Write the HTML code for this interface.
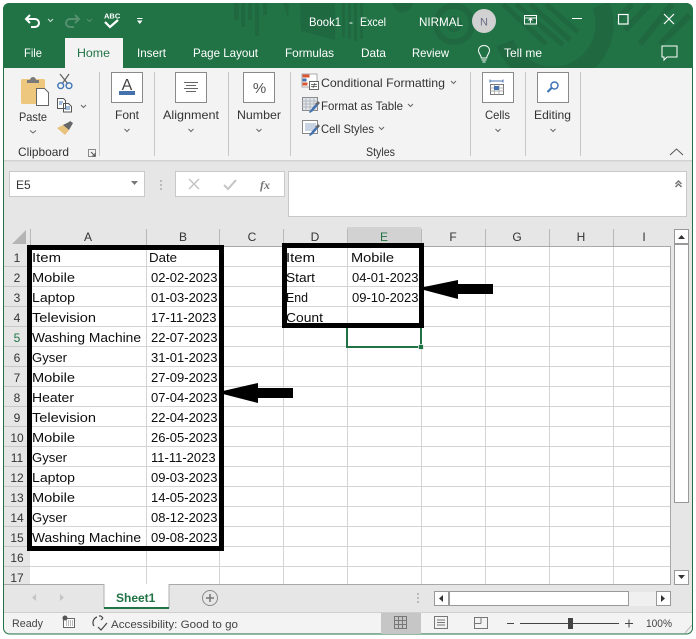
<!DOCTYPE html>
<html><head><meta charset="utf-8"><style>
html,body{margin:0;padding:0;background:#fff;width:696px;height:639px;overflow:hidden}
svg{display:block}
text{font-family:"Liberation Sans",sans-serif;white-space:pre}
.t{fill:#fff;font-size:12px}
.r{fill:#333;font-size:12px}
.c{fill:#0d0d0d;font-size:13px}
.h{fill:#333;font-size:12px;text-anchor:middle}
.car{fill:none;stroke:#666;stroke-width:1}
.g{stroke:#d4d4d4;stroke-width:1;fill:none}
</style></head><body>
<svg width="696" height="639" viewBox="0 0 696 639" xmlns="http://www.w3.org/2000/svg">
<defs><clipPath id="tb"><path d="M3 68V9a6 6 0 0 1 6-6H686a6 6 0 0 1 6 6V68Z"/></clipPath></defs>
<rect width="696" height="639" fill="#fff"/>
<!-- window -->
<rect x="3.500" y="3.500" width="689" height="630.500" rx="6" fill="#e6e6e6" stroke="#217346" stroke-width="1"/>
<path d="M3 68V9a6 6 0 0 1 6-6H686a6 6 0 0 1 6 6V68Z" fill="#217346"/>
<!-- title pattern -->
<g clip-path="url(#tb)">
<g fill="#1f6840">
<rect x="234" y="3" width="5" height="17"/><rect x="241" y="3" width="4" height="24"/><rect x="248" y="3" width="4" height="17"/><rect x="255" y="3" width="4" height="33"/><rect x="263" y="3" width="4" height="12"/>
<path d="M283 3h6l-1 14Z"/><path d="M300 3h35v37l-34-9Z" opacity=".9"/>
<rect x="342" y="3" width="3" height="34"/><rect x="348" y="3" width="3" height="36"/><rect x="354" y="3" width="3" height="38"/><rect x="360" y="3" width="3" height="36"/>
<path d="M392 3h21a11 13 0 0 1-21 0Z"/>
</g>
<g fill="none" stroke="#1f6840">
<circle cx="454" cy="24" r="18" stroke-width="6"/><circle cx="454" cy="24" r="6" stroke-width="4"/>
<path d="M505 43A51 51 0 0 0 601 5" stroke-width="18"/>
<path d="M503 4L546 44M516 4L563 45M530 4L570 40M546 4L578 32" stroke-width="5"/>
<path d="M632 4L617 20M650 4L625 30M672 4L640 44M690 15L660 44" stroke-width="6"/>
</g>
</g>
<!-- QAT -->
<g fill="none" stroke="#fff" stroke-width="2">
<path d="M30 15l-4 4 4 4M26 19h9a4 4 0 0 1 0 8h-4"/>
</g>
<path d="M48 19l2.500 2.500 2.500-2.500" fill="none" stroke="#cfe3d7"/>
<g fill="none" stroke="#55906f" stroke-width="2"><path d="M75 15l4 4-4 4M79 19h-9a4 4 0 0 0 0 8h4"/></g>
<path d="M87 19l2.500 2.500 2.500-2.500" fill="none" stroke="#55906f"/>
<text x="104" y="18.500" font-weight="bold" fill="#fff" style="font-size:7.500px">ABC</text>
<path d="M105 22l5 5 8-7" fill="none" stroke="#fff" stroke-width="2.200"/>
<path d="M137 18.500h5.500" stroke="#fff" fill="none"/><path d="M137 20.500h5.500l-2.750 3.500Z" fill="#fff"/>
<text class="t" x="309" y="26" textLength="32" lengthAdjust="spacingAndGlyphs">Book1</text>
<text class="t" x="349" y="26">-</text>
<text class="t" x="360" y="26" textLength="26" lengthAdjust="spacingAndGlyphs">Excel</text>
<text class="t" x="419" y="26" textLength="44" lengthAdjust="spacingAndGlyphs">NIRMAL</text>
<circle cx="484" cy="21" r="12" fill="#d1d1d1"/>
<text x="484" y="25.500" text-anchor="middle" style="font-size:11px" fill="#6b6b8a">N</text>
<g fill="none" stroke="#fff" stroke-width="1">
<rect x="524.500" y="15.500" width="12" height="8.500"/><path d="M524 18h13M530.500 23v-4M528.500 20.500l2-2 2 2"/>
<path d="M572 18.500h10"/><rect x="618.500" y="14.500" width="9.500" height="9.500" stroke-width="1.200"/>
<path d="M664 14l10 10M674 14l-10 10" stroke-width="1.200"/>
<path d="M661 46h15v11h-10l-3 3v-3h-2Z" transform="translate(1 0)"/>
<path d="M484.500 52c-3.500 0-5.500 2.500-5.500 5 0 3 2.500 4 2.800 7.500h5.400c.3-3.500 2.800-4.500 2.800-7.500 0-2.500-2-5-5.500-5ZM482 66.500h5M483 68.500h3" transform="translate(-.500 -6.500)"/>
</g>
<!-- tabs -->
<text class="t" x="24" y="57" textLength="18" lengthAdjust="spacingAndGlyphs">File</text>
<rect x="65" y="38" width="58" height="30" fill="#f3f3f3"/>
<text x="77" y="57" fill="#217346" style="font-size:12px" textLength="33" lengthAdjust="spacingAndGlyphs">Home</text>
<text class="t" x="137" y="57" textLength="29" lengthAdjust="spacingAndGlyphs">Insert</text>
<text class="t" x="193" y="57" textLength="65" lengthAdjust="spacingAndGlyphs">Page Layout</text>
<text class="t" x="285" y="57" textLength="49" lengthAdjust="spacingAndGlyphs">Formulas</text>
<text class="t" x="361" y="57" textLength="25" lengthAdjust="spacingAndGlyphs">Data</text>
<text class="t" x="412" y="57" textLength="37" lengthAdjust="spacingAndGlyphs">Review</text>
<text class="t" x="504" y="57" textLength="38" lengthAdjust="spacingAndGlyphs">Tell me</text>
<!-- ribbon -->
<rect x="4" y="68" width="688" height="92" fill="#f3f3f3"/>
<rect x="4" y="160" width="688" height="1.500" fill="#d2d2d2"/>
<g fill="#c6c6c6"><rect x="99" y="72" width="1" height="84"/><rect x="154" y="72" width="1" height="84"/><rect x="228" y="72" width="1" height="84"/><rect x="290" y="72" width="1" height="84"/><rect x="470" y="72" width="1" height="84"/><rect x="525" y="72" width="1" height="84"/><rect x="580" y="72" width="1" height="84"/></g>
<!-- paste -->
<rect x="21" y="79" width="24" height="25" rx="1.500" fill="#edc77d"/>
<path d="M27 82v-2h3a3 3 0 0 1 6 0h3v3H27Z" fill="#7a7a7a"/>
<path d="M36.500 88.500h8l4 4v13h-12Z" fill="#fff" stroke="#666"/>
<text class="r" x="19" y="121" textLength="28" lengthAdjust="spacingAndGlyphs">Paste</text>
<path class="car" d="M30 130.500l3 2.500 3-2.500"/>
<g fill="none" stroke="#666"><path d="M60 74l8 10M69 74l-7 10" stroke-width="1.300"/></g>
<g fill="none" stroke="#3f77b5" stroke-width="1.400"><circle cx="60.700" cy="85.700" r="2.900"/><circle cx="69" cy="85.700" r="2.900"/></g>
<path d="M57.500 98.500h6l2 2v8h-8ZM63.500 103.500h5l3 3v5.500h-8Z" fill="#fff" stroke="#555"/>
<path d="M59 102h4M59 104h3M65 107h5M65 109h5" stroke="#3f77b5" fill="none"/>
<path class="car" d="M81 105l2.500 2.500 2.500-2.500"/>
<path d="M57 128l6-3 6 5-4 5Z" fill="#e9c27c"/><path d="M63 125l6-3 1-1 3 2-4 7Z" fill="#666"/>
<text class="r" x="18" y="156" textLength="51" lengthAdjust="spacingAndGlyphs">Clipboard</text>
<rect x="88.500" y="149.500" width="7" height="7" fill="none" stroke="#8a8a8a"/><path d="M91 152l4 4M95 153v3h-3" fill="none" stroke="#555"/>
<!-- font etc -->
<g fill="#fff" stroke="#8a8a8a"><rect x="111.500" y="72.500" width="31" height="30"/><rect x="175.500" y="72.500" width="31" height="30"/><rect x="243.500" y="72.500" width="31" height="30"/><rect x="482.500" y="72.500" width="31" height="30"/><rect x="537.500" y="72.500" width="31" height="30"/></g>
<text x="127" y="90" text-anchor="middle" fill="#444" style="font-size:16px">A</text>
<rect x="119" y="91" width="16" height="4" fill="#4472ae"/>
<path d="M184 82.500h14M186 85.500h10M184 88.500h14M186 91.500h10" stroke="#666" fill="none"/>
<text x="259.500" y="93" text-anchor="middle" fill="#555" style="font-size:15px">%</text>
<text class="r" x="115" y="119" textLength="24" lengthAdjust="spacingAndGlyphs">Font</text><path class="car" d="M124.500 129l2.500 2.500 2.500-2.500"/>
<text class="r" x="163" y="119" textLength="56" lengthAdjust="spacingAndGlyphs">Alignment</text><path class="car" d="M188.500 129l2.500 2.500 2.500-2.500"/>
<text class="r" x="237" y="119" textLength="44" lengthAdjust="spacingAndGlyphs">Number</text><path class="car" d="M256.500 129l2.500 2.500 2.500-2.500"/>
<!-- styles -->
<rect x="302" y="74" width="15" height="13" fill="#fff" stroke="#8a8a8a" stroke-width=".7"/>
<rect x="302.500" y="74.500" width="7" height="3" fill="#d9552f"/><rect x="302.500" y="78.500" width="4" height="3" fill="#4472ae"/><rect x="302.500" y="82.500" width="5" height="3" fill="#d9552f"/>
<rect x="309.500" y="81.500" width="9" height="8" fill="#fff" stroke="#666"/><path d="M311 84.500h6M311 86.500h6M315 83l-2 5" stroke="#444" stroke-width=".7" fill="none"/>
<text class="r" x="321" y="87" textLength="124" lengthAdjust="spacingAndGlyphs">Conditional Formatting</text><path class="car" d="M451 81l2.500 2.500 2.500-2.500" />
<g><rect x="302.500" y="97.500" width="15" height="13" fill="#dfe6ef" stroke="#888"/><path d="M302 101h16M302 104h16M302 107h16M306 97v14M310 97v14M314 97v14" stroke="#aaa" stroke-width=".7"/><path d="M309 112l4-5 4-4 2 1-6 7-3 2Z" fill="#4472ae"/><path d="M315 104l3-3 2 2-2 2Z" fill="#666"/></g>
<text class="r" x="321" y="110" textLength="82" lengthAdjust="spacingAndGlyphs">Format as Table</text><path class="car" d="M408 104l2.500 2.500 2.500-2.500"/>
<rect x="302.500" y="120.500" width="15" height="13" fill="#fff" stroke="#888"/><rect x="305" y="123" width="11" height="8" fill="#c8d3e4"/><path d="M309 135l4-5 4-4 2 1-6 7-3 2Z" fill="#4472ae"/><path d="M315 127l3-3 2 2-2 2Z" fill="#666"/>
<text class="r" x="321" y="133" textLength="53" lengthAdjust="spacingAndGlyphs">Cell Styles</text><path class="car" d="M379 127l2.500 2.500 2.500-2.500"/>
<text class="r" x="366" y="156" textLength="29" lengthAdjust="spacingAndGlyphs">Styles</text>
<!-- cells/editing -->
<path d="M490 81h13M490 79.500v3M503 79.500v3" stroke="#4472ae" fill="none"/>
<rect x="490.500" y="84.500" width="13" height="10" fill="#fff" stroke="#777"/><path d="M490 88h14M490 91h14M494.500 84v11M499 84v11" stroke="#999" stroke-width=".7"/><rect x="494" y="86" width="5" height="4" fill="#4472ae"/>
<text class="r" x="485" y="119" textLength="25" lengthAdjust="spacingAndGlyphs">Cells</text><path class="car" d="M495.500 129l2.500 2.500 2.500-2.500"/>
<circle cx="554.500" cy="85.500" r="3.500" fill="none" stroke="#3f77b5" stroke-width="1.500"/><path d="M551.500 88l-4 4" stroke="#3f77b5" stroke-width="2.200"/>
<text class="r" x="534" y="119" textLength="37" lengthAdjust="spacingAndGlyphs">Editing</text><path class="car" d="M550.500 129l2.500 2.500 2.500-2.500"/>
<path d="M670 155l6.500-6 6.500 6" fill="none" stroke="#555"/>
<!-- formula area -->
<rect x="9.500" y="171.500" width="135" height="25" fill="#fff" stroke="#c8c8c8"/>
<text x="16" y="189" fill="#333" style="font-size:12px">E5</text>
<path d="M131 181h7l-3.500 4Z" fill="#777"/>
<path d="M160 180h2v2h-2ZM160 184h2v2h-2ZM160 188h2v2h-2Z" fill="#bbb"/>
<rect x="175.500" y="171.500" width="109" height="25" fill="#fff" stroke="#c8c8c8"/>
<path d="M189 179l10 10M199 179l-10 10" stroke="#c4c4c4" stroke-width="1.500"/>
<path d="M224 185l4 4 8-9" fill="none" stroke="#c4c4c4" stroke-width="2"/>
<text x="260" y="189" fill="#777" style="font:italic bold 12px 'Liberation Serif',serif">fx</text>
<rect x="288.500" y="171.500" width="398" height="45" fill="#fff" stroke="#c8c8c8"/>
<path d="M675.500 184l3-3 3 3M675.500 187l3-3 3 3" fill="none" stroke="#777" stroke-width="1.500"/>
<!-- header -->
<rect x="4" y="227" width="666" height="20" fill="#e6e6e6"/>
<rect x="347" y="227" width="74" height="20" fill="#d2d2d2"/>
<rect x="4" y="247" width="26" height="337" fill="#e6e6e6"/>
<path d="M26 230v14H12Z" fill="#b4b4b4"/>
<!-- sheet -->
<rect x="30" y="247" width="640" height="337" fill="#fff"/>
<g class="g">
<path d="M30 266.500H670M30 286.500H670M30 306.500H670M30 326.500H670M30 346.500H670M30 366.500H670M30 386.500H670M30 406.500H670M30 426.500H670M30 446.500H670M30 466.500H670M30 486.500H670M30 506.500H670M30 526.500H670M30 546.500H670M30 566.500H670"/>
<path d="M146.500 247V584M219.500 247V584M283.500 247V584M347.500 247V584M421.500 247V584M485.500 247V584M549.500 247V584M613.500 247V584"/>
<path d="M4 266.500H30M4 286.500H30M4 306.500H30M4 326.500H30M4 346.500H30M4 366.500H30M4 386.500H30M4 406.500H30M4 426.500H30M4 446.500H30M4 466.500H30M4 486.500H30M4 506.500H30M4 526.500H30M4 546.500H30M4 566.500H30" stroke="#c8c8c8"/>
<path d="M30.500 229V247M146.500 229V247M219.500 229V247M283.500 229V247M347.500 229V247M421.500 229V247M485.500 229V247M549.500 229V247M613.500 229V247" stroke="#b8b8b8"/>
</g>
<path d="M30 246.500H670.500V584.500H4" fill="none" stroke="#a8a8a8"/>
<g class="h">
<text class="h" x="88" y="241">A</text><text class="h" x="183" y="241">B</text><text class="h" x="252" y="241">C</text><text class="h" x="315" y="241">D</text><text class="h" x="384" y="241" style="fill:#217346">E</text><text class="h" x="453" y="241">F</text><text class="h" x="517" y="241">G</text><text class="h" x="581" y="241">H</text><text class="h" x="644" y="241">I</text>
<text class="h" x="17" y="262">1</text><text class="h" x="17" y="282">2</text><text class="h" x="17" y="302">3</text><text class="h" x="17" y="322">4</text><text class="h" x="17" y="342" style="fill:#217346">5</text><text class="h" x="17" y="362">6</text><text class="h" x="17" y="382">7</text><text class="h" x="17" y="402">8</text><text class="h" x="17" y="422">9</text><text class="h" x="17" y="442">10</text><text class="h" x="17" y="462">11</text><text class="h" x="17" y="482">12</text><text class="h" x="17" y="502">13</text><text class="h" x="17" y="522">14</text><text class="h" x="17" y="542">15</text><text class="h" x="17" y="562">16</text><text class="h" x="17" y="582">17</text>
</g>
<!-- cells -->
<text class="c" x="32" y="262" textLength="29" lengthAdjust="spacingAndGlyphs">Item</text><text class="c" x="149" y="262" textLength="28" lengthAdjust="spacingAndGlyphs">Date</text>
<text class="c" x="32" y="282" textLength="43" lengthAdjust="spacingAndGlyphs">Mobile</text><text class="c" x="151" y="282">02-02-2023</text>
<text class="c" x="32" y="302" textLength="43" lengthAdjust="spacingAndGlyphs">Laptop</text><text class="c" x="151" y="302">01-03-2023</text>
<text class="c" x="32" y="322" textLength="64" lengthAdjust="spacingAndGlyphs">Television</text><text class="c" x="151" y="322">17-11-2023</text>
<text class="c" x="32" y="342" textLength="109" lengthAdjust="spacingAndGlyphs">Washing Machine</text><text class="c" x="151" y="342">22-07-2023</text>
<text class="c" x="32" y="362" textLength="35" lengthAdjust="spacingAndGlyphs">Gyser</text><text class="c" x="151" y="362">31-01-2023</text>
<text class="c" x="32" y="382" textLength="43" lengthAdjust="spacingAndGlyphs">Mobile</text><text class="c" x="151" y="382">27-09-2023</text>
<text class="c" x="32" y="402" textLength="42" lengthAdjust="spacingAndGlyphs">Heater</text><text class="c" x="151" y="402">07-04-2023</text>
<text class="c" x="32" y="422" textLength="64" lengthAdjust="spacingAndGlyphs">Television</text><text class="c" x="151" y="422">22-04-2023</text>
<text class="c" x="32" y="442" textLength="43" lengthAdjust="spacingAndGlyphs">Mobile</text><text class="c" x="151" y="442">26-05-2023</text>
<text class="c" x="32" y="462" textLength="35" lengthAdjust="spacingAndGlyphs">Gyser</text><text class="c" x="151" y="462">11-11-2023</text>
<text class="c" x="32" y="482" textLength="43" lengthAdjust="spacingAndGlyphs">Laptop</text><text class="c" x="151" y="482">09-03-2023</text>
<text class="c" x="32" y="502" textLength="43" lengthAdjust="spacingAndGlyphs">Mobile</text><text class="c" x="151" y="502">14-05-2023</text>
<text class="c" x="32" y="522" textLength="35" lengthAdjust="spacingAndGlyphs">Gyser</text><text class="c" x="151" y="522">08-12-2023</text>
<text class="c" x="32" y="542" textLength="109" lengthAdjust="spacingAndGlyphs">Washing Machine</text><text class="c" x="151" y="542">09-08-2023</text>
<text class="c" x="286" y="262" textLength="29" lengthAdjust="spacingAndGlyphs">Item</text><text class="c" x="351" y="262" textLength="43" lengthAdjust="spacingAndGlyphs">Mobile</text>
<text class="c" x="286" y="282" textLength="29" lengthAdjust="spacingAndGlyphs">Start</text><text class="c" x="352" y="282">04-01-2023</text>
<text class="c" x="286" y="302" textLength="22" lengthAdjust="spacingAndGlyphs">End</text><text class="c" x="352" y="302">09-10-2023</text>
<text class="c" x="286" y="322" textLength="37" lengthAdjust="spacingAndGlyphs">Count</text>
<!-- selection -->
<rect x="347" y="326" width="74" height="21" fill="none" stroke="#217346" stroke-width="2"/>
<rect x="418.500" y="344.500" width="5" height="5" fill="#217346" stroke="#fff" stroke-width=".7"/>
<!-- boxes -->
<rect x="29.500" y="247.500" width="192" height="301" fill="none" stroke="#000" stroke-width="5"/>
<rect x="284.500" y="245.500" width="137" height="80" fill="none" stroke="#000" stroke-width="5"/>
<path d="M223 391L258 383V388H293V398H258V403L223 394Z" fill="#000"/>
<path d="M424 287L458 280V284H493V294H458V299L424 290Z" fill="#000"/>
<!-- vscroll -->
<rect x="671" y="227" width="21" height="358" fill="#e6e6e6"/>
<rect x="692" y="227" width="1" height="358" fill="#217346"/>
<rect x="674.500" y="229.500" width="14" height="14" fill="#fff" stroke="#999"/><path d="M678 239l3.500-4 3.500 4Z" fill="#333"/>
<rect x="674.500" y="244.500" width="14" height="258" fill="#fff" stroke="#999"/>
<rect x="674.500" y="570.500" width="14" height="14" fill="#fff" stroke="#999"/><path d="M678 575l3.500 4 3.500-4Z" fill="#333"/>
<!-- tab bar -->
<rect x="4" y="585" width="688" height="27" fill="#e6e6e6"/>
<rect x="4" y="612" width="688" height="1" fill="#cfcfcf"/>
<path d="M36 594l-4 3.500 4 3.500ZM60 594l4 3.500-4 3.500Z" fill="#c4c4c4"/>
<path d="M104 584V608H169V584" fill="#fff" stroke="#b0b0b0"/>
<rect x="104" y="607" width="65" height="2" fill="#217346"/>
<text x="116" y="602" fill="#217346" style="font-size:12px;font-weight:bold">Sheet1</text>
<circle cx="210" cy="598" r="7.500" fill="none" stroke="#8a8a8a"/><path d="M206 598h8M210 594v8" stroke="#777" stroke-width="1.500"/>
<path d="M417 593h2v2h-2ZM417 597h2v2h-2ZM417 601h2v2h-2Z" fill="#bbb"/>
<rect x="434.500" y="591.500" width="14" height="14" fill="#fff" stroke="#999"/><path d="M443 595v7l-4-3.500Z" fill="#333"/>
<rect x="449.500" y="591.500" width="179" height="14" fill="#fff" stroke="#999"/>
<rect x="629" y="592" width="27" height="14" fill="#f0f0f0"/>
<rect x="656.500" y="591.500" width="14" height="14" fill="#fff" stroke="#999"/><path d="M661 595v7l4-3.500Z" fill="#333"/>
<!-- status -->
<path d="M4 613H692V627a6 6 0 0 1-6 6H10a6 6 0 0 1-6-6Z" fill="#f3f3f3"/>
<text x="12" y="627" fill="#444" style="font-size:11px" textLength="31" lengthAdjust="spacingAndGlyphs">Ready</text>
<rect x="63.500" y="618.500" width="11" height="9" fill="#fff" stroke="#666"/><circle cx="65" cy="618" r="2.500" fill="#555"/><path d="M66 621h7M66 623h7M66 625h7" stroke="#777" stroke-dasharray="1 1"/>
<path d="M97 617a6 6 0 0 0-3 9M101 616l2 2M103 618l-2 2M101 616h-2M98 627l3 3 6-7" fill="none" stroke="#444" stroke-width="1.200"/>
<text x="111" y="628" fill="#444" style="font-size:11px" textLength="127" lengthAdjust="spacingAndGlyphs">Accessibility: Good to go</text>
<rect x="381" y="613" width="40" height="21" fill="#c6c6c6"/>
<path d="M394.500 616.500h12v12h-12ZM394.500 620.500h12M394.500 624.500h12M398.500 616.500v12M402.500 616.500v12" fill="none" stroke="#777"/>
<rect x="434.500" y="616.500" width="13" height="12" fill="none" stroke="#777"/><path d="M437 620h8M437 622.500h8M437 625h8" stroke="#777" fill="none"/>
<path d="M474.500 617.500h13v11h-13ZM481 617.500v6M474.500 623.500h6.500" fill="none" stroke="#777"/>
<path d="M507 623.500h7M520 623.500h99M625 623.500h8M629 619.500v8" stroke="#444" fill="none"/>
<rect x="568" y="618" width="5" height="11" fill="#444"/>
<text x="646" y="627" fill="#444" style="font-size:11px" textLength="26" lengthAdjust="spacingAndGlyphs">100%</text>
<path d="M692 625l-7 8" stroke="#bbb"/>
</svg>
</body></html>
